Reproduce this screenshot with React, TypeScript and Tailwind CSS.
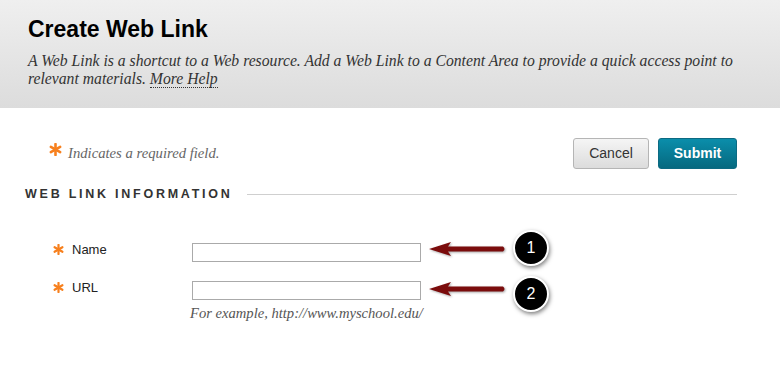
const Asterisk = ({ className }: { className?: string }) => (
  <svg viewBox="0 0 12 12" className={className}>
    <g stroke="#f7801e" strokeWidth="2.4" strokeLinecap="round">
      <line x1="6" y1="1" x2="6" y2="11" />
      <line x1="1.7" y1="3.5" x2="10.3" y2="8.5" />
      <line x1="1.7" y1="8.5" x2="10.3" y2="3.5" />
    </g>
  </svg>
);

// annotation overlay: arrow pointing at the input plus numbered circle
const Callout = ({ n, arrowTop, circleTop }: { n: number; arrowTop: string; circleTop: string }) => (
  <>
    <svg
      width="80"
      height="18"
      viewBox="0 0 80 18"
      className={`absolute left-[236px] ${arrowTop} drop-shadow-[1px_1px_1px_rgba(0,0,0,0.35)]`}
    >
      <path d="M1 9 L23 2 L20 6.5 L75 6.5 Q78 9 75 11.5 L20 11.5 L23 16 Z" fill="#7b0c0c" />
    </svg>
    <div
      className={`absolute left-[321px] ${circleTop} w-[36px] h-[36px] rounded-full bg-black border-2 border-white shadow-[1px_2px_4px_rgba(0,0,0,0.5)] flex items-center justify-center text-white text-[16px]`}
    >
      {n}
    </div>
  </>
);

const App = () => {
  return (
    <div className="w-[780px] h-[379px] bg-white overflow-hidden font-['Liberation_Sans',Arial,sans-serif]">
      <header className="h-[108px] bg-gradient-to-b from-[#efefef] to-[#dcdcdc] px-[28px] pt-[14px]">
        <h1 className="text-[23px] font-bold text-black leading-[30px]">Create Web Link</h1>
        <p className="mt-[8px] font-['Liberation_Serif',Georgia,serif] italic text-[15.7px] leading-[18px] text-[#333] w-[724px]">
          A Web Link is a shortcut to a Web resource. Add a Web Link to a Content Area to provide a quick access point to
          relevant materials.{" "}
          <span className="border-b border-dotted border-[#333]">More Help</span>
        </p>
      </header>

      <main className="px-[25px]">
        <div className="flex items-center justify-between pt-[30px] pr-[18px]">
          <div className="flex items-start pl-[24px]">
            <Asterisk className="w-[13px] h-[13px] mt-[1px]" />
            <span className="ml-[6px] font-['Liberation_Serif',Georgia,serif] italic text-[14.7px] text-[#666]">
              Indicates a required field.
            </span>
          </div>
          <div className="flex gap-[9px]">
            <button className="w-[76px] h-[31px] rounded-[3px] border border-[#b5b5b5] bg-gradient-to-b from-[#f5f5f5] to-[#dcdcdc] text-[14px] text-[#333]">
              Cancel
            </button>
            <button className="w-[79px] h-[31px] rounded-[3px] border border-[#0c6a82] bg-gradient-to-b from-[#0b8eab] to-[#06697f] text-[14px] font-bold text-white">
              Submit
            </button>
          </div>
        </div>

        <div className="flex items-center mt-[16px] pr-[18px]">
          <h2 className="text-[12.5px] font-bold tracking-[2.75px] text-[#333]">WEB LINK INFORMATION</h2>
          <div className="flex-1 h-px bg-[#cfcfcf] ml-[14px]" />
        </div>

        <div className="mt-[39px] grid grid-cols-[167px_1fr] gap-y-[19px]">
          <div className="flex items-start pl-[28px] h-[18px]">
            <Asterisk className="w-[11px] h-[11px] mt-[1px]" />
            <label className="ml-[8px] text-[13px] leading-[13px] text-[#222]">Name</label>
          </div>
          <div className="relative">
            <input className="block w-[229px] h-[19px] border border-[#aaa] bg-white" />
            <Callout n={1} arrowTop="top-[-3px]" circleTop="top-[-13px]" />
          </div>

          <div className="flex items-start pl-[28px] h-[18px]">
            <Asterisk className="w-[11px] h-[11px] mt-[1px]" />
            <label className="ml-[8px] text-[13px] leading-[13px] text-[#222]">URL</label>
          </div>
          <div>
            <div className="relative">
              <input className="block w-[229px] h-[19px] border border-[#aaa] bg-white" />
              <Callout n={2} arrowTop="top-[-1px]" circleTop="top-[-5px]" />
            </div>
            <p className="mt-[4px] -ml-[2px] font-['Liberation_Serif',Georgia,serif] italic text-[14.6px] leading-[18px] text-[#555]">
              For example, http://www.myschool.edu/
            </p>
          </div>
        </div>
      </main>
    </div>
  );
};

export default App;
